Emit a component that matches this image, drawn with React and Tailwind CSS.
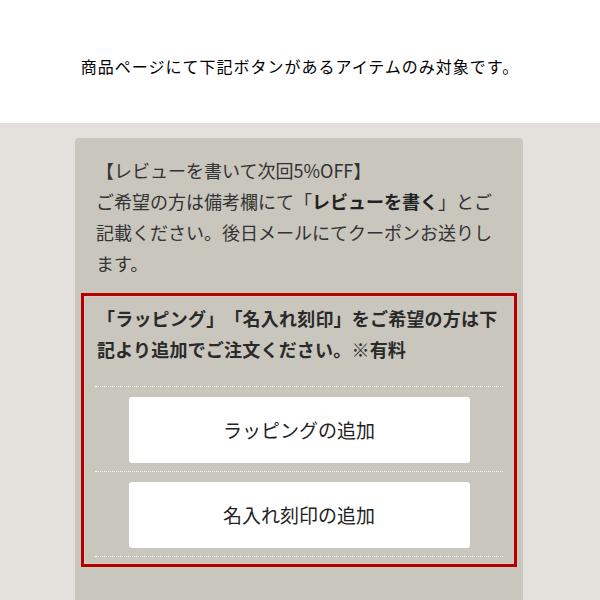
import React from 'react';

const jp = { fontFamily: '"Noto Sans CJK JP", "Noto Sans", sans-serif' };

const Dots = () => <div className="mx-[10px] border-t border-dotted border-white" />;

const AddButton = ({ label }) => (
    <div className="pt-[10px] pb-[8px]">
        <button
            type="button"
            className="mx-auto flex h-[66px] w-[341px] items-center justify-center rounded-[3px] bg-white text-[19px] text-[#222]"
        >
            {label}
        </button>
    </div>
);

const App = () => {
    return (
        <div className="min-h-[600px] bg-[#e4e1dd] [text-spacing-trim:space-all]" style={jp}>
            <div className="h-[123px] bg-white pt-[54px] text-center text-[16px] leading-[24px] tracking-[1px] text-black">
                商品ページにて下記ボタンがあるアイテムのみ対象です。
            </div>

            <div className="ml-[75px] mt-[15px] min-h-[470px] w-[448px] rounded-t-[4px] bg-[#c9c6be] px-[6px] pt-[17px]">
                <p className="px-[15px] text-[18px] leading-[31px] text-[#333]">
                    【レビューを書いて次回5%OFF】<br />
                    ご希望の方は備考欄にて「<span className="font-bold text-[#222]">レビューを書く</span>」とご記載ください。後日メールにてクーポンお送りします。
                </p>

                <div className="mt-[14px] border-[3px] border-[#b40000]">
                    <div className="border border-[#e2c4c0] pb-[6px]">
                        <p className="px-[12px] pt-[6px] text-[18px] font-bold leading-[31px] tracking-[0.2px] text-[#2a2a2a]">
                            「ラッピング」「名入れ刻印」をご希望の方は下記より追加でご注文ください。※有料
                        </p>
                        <div className="mt-[21px]">
                            <Dots />
                            <AddButton label="ラッピングの追加" />
                            <Dots />
                            <AddButton label="名入れ刻印の追加" />
                            <Dots />
                        </div>
                    </div>
                </div>
            </div>
        </div>
    );
};

export default App;
